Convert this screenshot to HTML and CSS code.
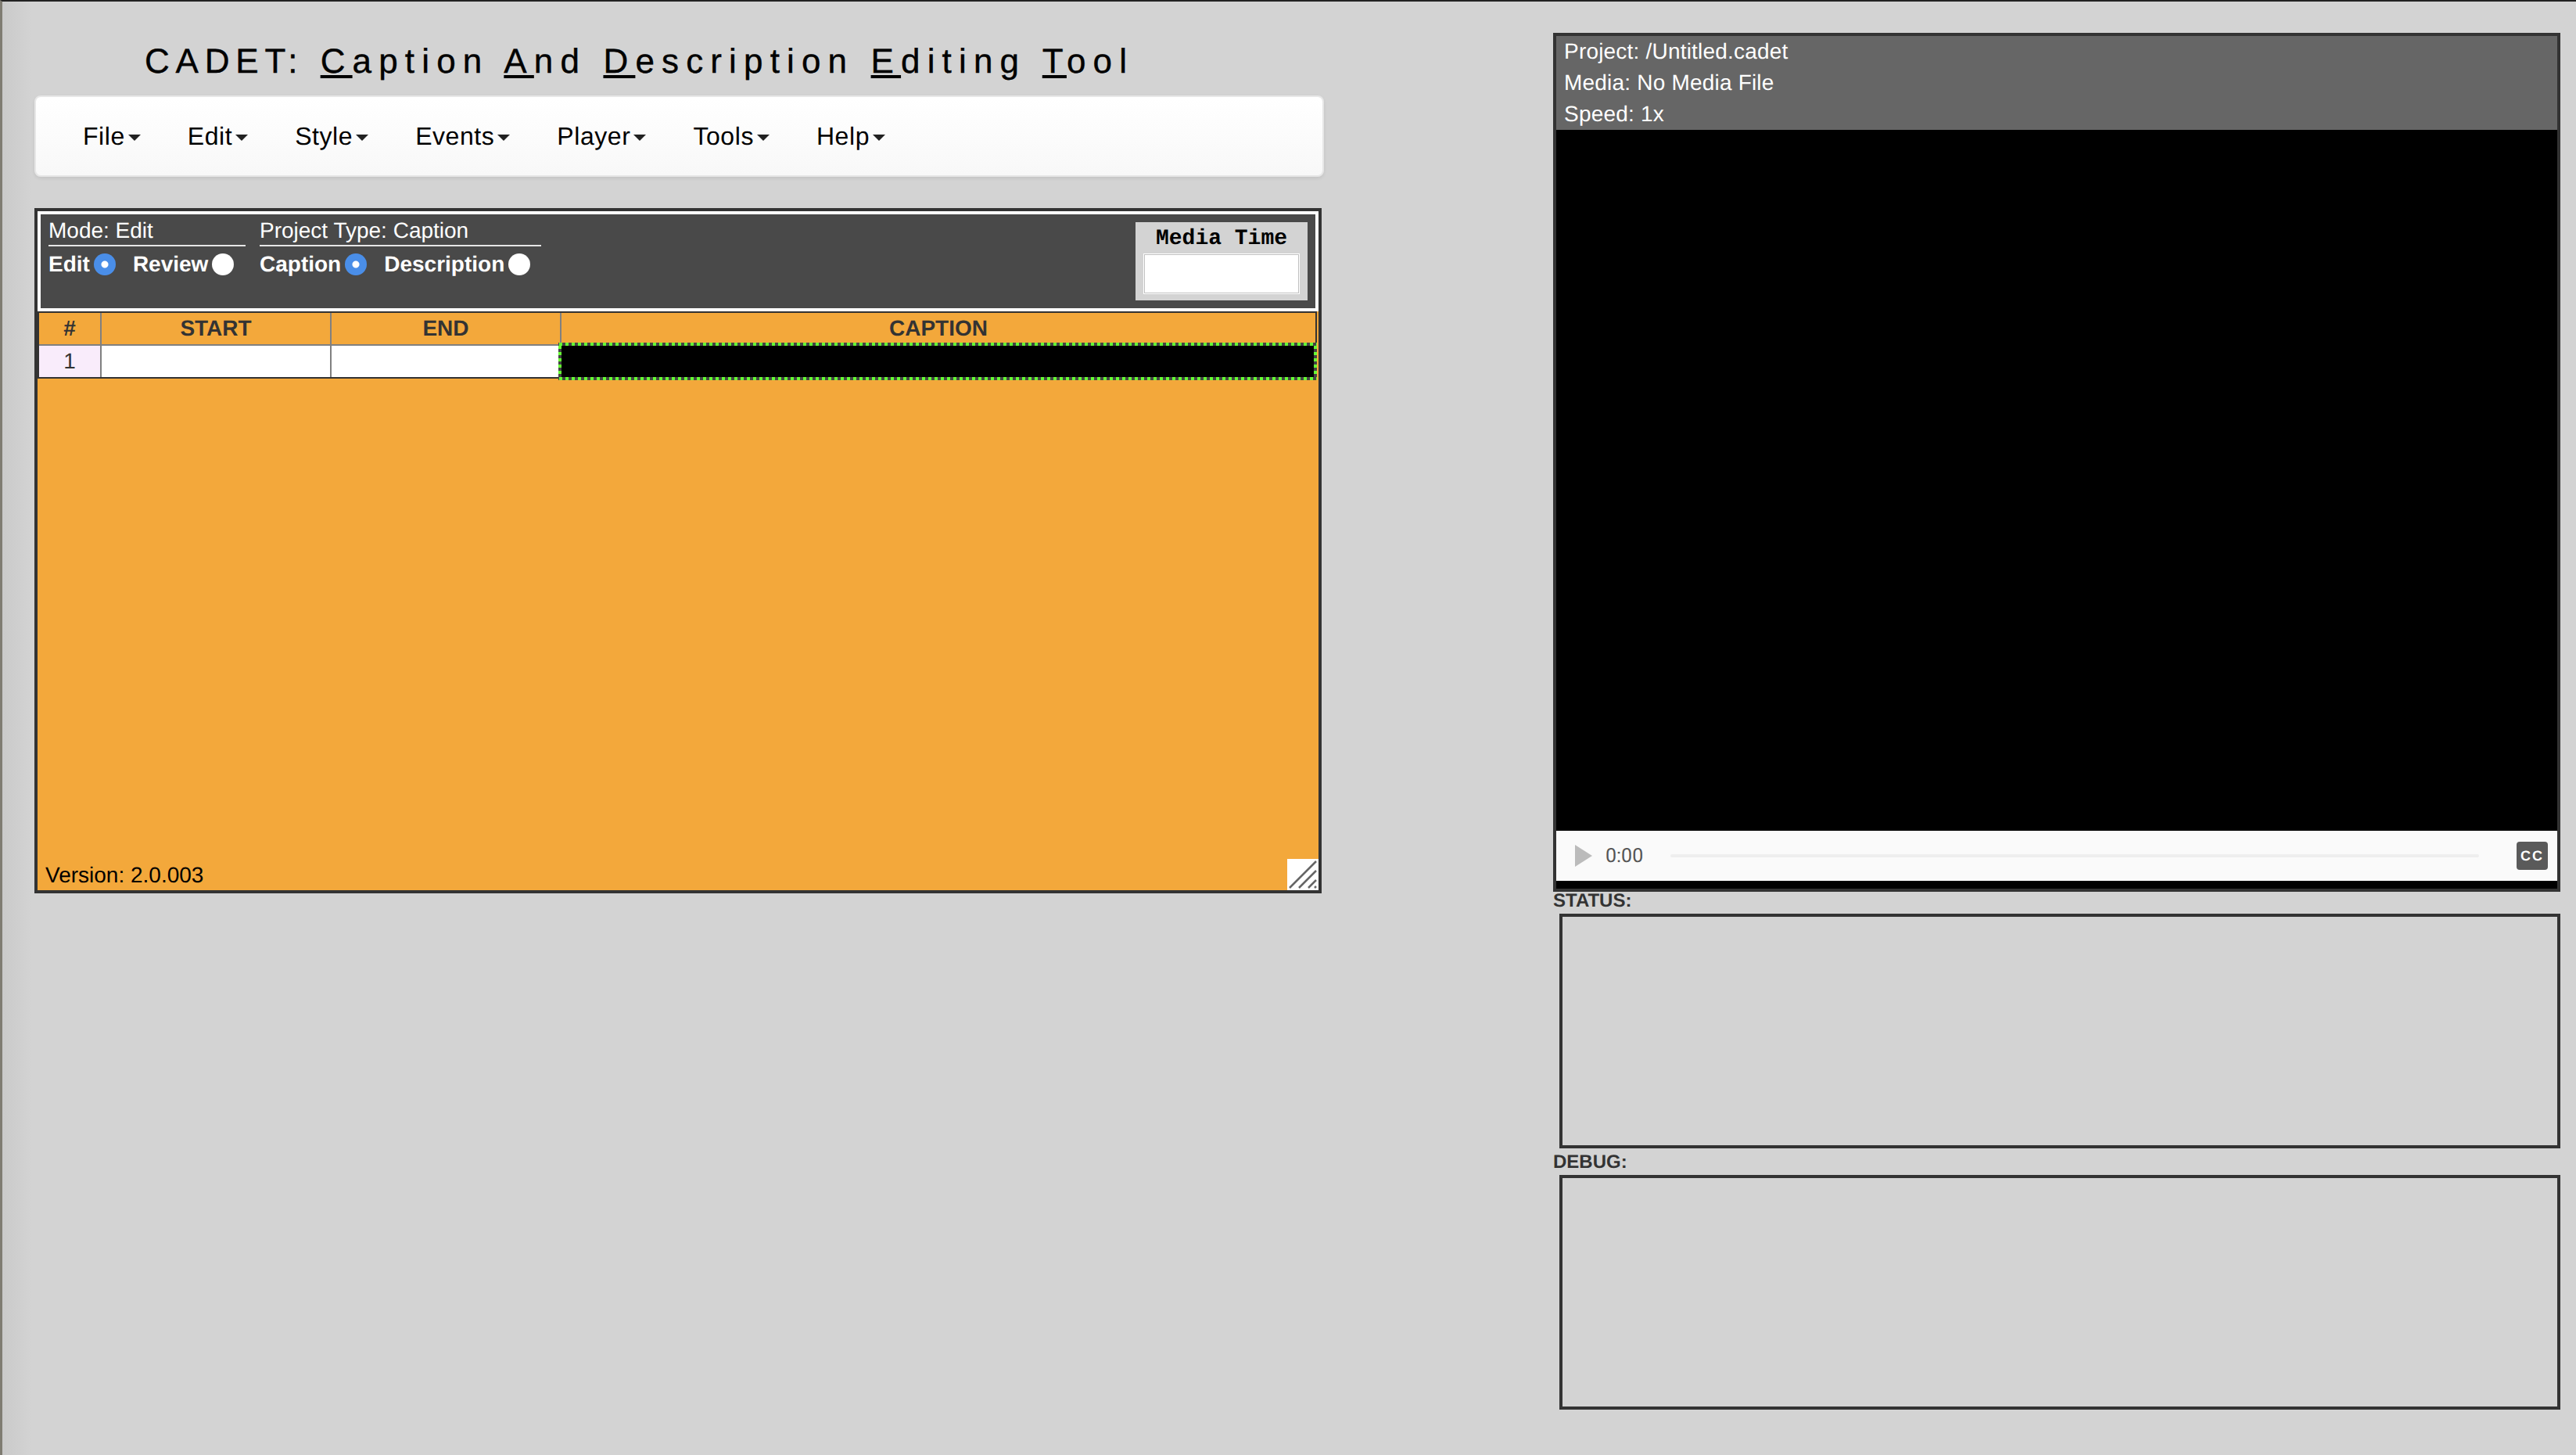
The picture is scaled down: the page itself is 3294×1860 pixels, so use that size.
FILE: index.html
```html
<!DOCTYPE html>
<html lang="en">
<head>
    <meta charset="UTF-8">
    <meta name="viewport" content="width=device-width, initial-scale=1.0">
    <title>CADET: Caption And Description Editing Tool</title>
    <link rel="stylesheet" href="styles.css">
</head>
<body>
    <div class="app">
        <!-- Left Column -->
        <div class="left-column">
            <h1 class="app-title"><span class="app-name">CADET:</span> <u>C</u>aption <u>A</u>nd <u>D</u>escription <u>E</u>diting <u>T</u>ool</h1>

            <nav class="navbar">
                <a class="nav-item">File<span class="caret"></span></a>
                <a class="nav-item">Edit<span class="caret"></span></a>
                <a class="nav-item">Style<span class="caret"></span></a>
                <a class="nav-item">Events<span class="caret"></span></a>
                <a class="nav-item">Player<span class="caret"></span></a>
                <a class="nav-item">Tools<span class="caret"></span></a>
                <a class="nav-item">Help<span class="caret"></span></a>
            </nav>

            <div class="editor">
                <div class="editor-header">
                    <div class="option-group mode-group">
                        <div class="option-title">Mode: Edit</div>
                        <div class="option-row">
                            <label class="option">Edit<input type="radio" name="mode" checked></label>
                            <label class="option">Review<input type="radio" name="mode"></label>
                        </div>
                    </div>
                    <div class="option-group type-group">
                        <div class="option-title">Project Type: Caption</div>
                        <div class="option-row">
                            <label class="option">Caption<input type="radio" name="type" checked></label>
                            <label class="option">Description<input type="radio" name="type"></label>
                        </div>
                    </div>
                    <div class="media-time">
                        <div class="media-time-label">Media Time</div>
                        <input type="text" class="media-time-input">
                    </div>
                </div>

                <div class="editor-body">
                    <table class="cue-table">
                        <thead>
                            <tr>
                                <th class="col-num">#</th>
                                <th class="col-time">START</th>
                                <th class="col-time">END</th>
                                <th>CAPTION</th>
                            </tr>
                        </thead>
                        <tbody>
                            <tr>
                                <td class="cell-num">1</td>
                                <td></td>
                                <td></td>
                                <td class="cell-active"></td>
                            </tr>
                        </tbody>
                    </table>
                    <div class="version">Version: 2.0.003</div>
                    <svg class="resizer" width="40" height="40" viewBox="0 0 40 40">
                        <rect width="40" height="40" fill="#fff"/>
                        <path d="M3 37L37 3M15 37L37 15M27 37L37 27M35 37L37 35" stroke="#666" stroke-width="2.5" fill="none"/>
                    </svg>
                </div>
            </div>
        </div>

        <!-- Right Column -->
        <div class="right-column">
            <div class="player">
                <div class="player-info">
                    <div>Project: /Untitled.cadet</div>
                    <div>Media: No Media File</div>
                    <div>Speed: 1x</div>
                </div>
                <div class="player-screen"></div>
                <div class="player-controls">
                    <svg class="play-icon" width="22" height="28" viewBox="0 0 22 28">
                        <path d="M0 0L22 14L0 28Z" fill="#bbb"/>
                    </svg>
                    <span class="player-time">0:00</span>
                    <div class="player-track"></div>
                    <span class="cc-button">CC</span>
                </div>
            </div>

            <div class="log-label">STATUS:</div>
            <div class="log-box"></div>
            <div class="log-label">DEBUG:</div>
            <div class="log-box"></div>
        </div>
    </div>
</body>
</html>
```

FILE: styles.css
```css
/* General Styles */
* {
    box-sizing: border-box;
}

body {
    margin: 0;
    padding: 0;
    height: 1860px;
    overflow: hidden;
    font-family: "Liberation Sans", Arial, sans-serif;
    font-size: 28px;
    text-rendering: geometricPrecision;
    background: linear-gradient(90deg, #c9c9c9, #d3d3d3 40px);
    border-top: 2px solid #222;
    border-left: 3px solid #7f7c72;
}

.app {
    display: flex;
    justify-content: space-between;
    padding: 40px 20px 0 41px;
}

/* Title and Menu */
.left-column {
    width: 1649px;
}

.app-title {
    margin: 0;
    height: 80px;
    padding: 12px 0 0 141px;
    font-size: 44px;
    font-weight: normal;
    line-height: 50px;
    letter-spacing: 9.15px;
    color: #000;
    white-space: nowrap;
    -webkit-text-stroke: 0.4px #000;
}

.app-name {
    letter-spacing: 7.8px;
}

.navbar {
    display: flex;
    height: 104px;
    padding: 0 30px;
    align-items: center;
    background: linear-gradient(#fff, #f8f8f8);
    border: 2px solid #e7e7e7;
    border-radius: 8px;
    box-shadow: 0 2px 4px rgba(0, 0, 0, 0.08);
}

.nav-item {
    padding: 0 30px;
    font-size: 32px;
    letter-spacing: 0.56px;
    color: #000;
}

.caret {
    display: inline-block;
    margin-left: 4px;
    vertical-align: middle;
    border-top: 8px solid #222;
    border-left: 8px solid transparent;
    border-right: 8px solid transparent;
}

/* Editor */
.editor {
    margin-top: 40px;
    width: 1646px;
    height: 876px;
    display: flex;
    flex-direction: column;
    background-color: #f3a83b;
    border: 4px solid #333;
}

.editor-header {
    display: flex;
    height: 128px;
    padding: 10px 10px 0 10px;
    background-color: #494949;
    border: 4px solid #fff;
    color: #fff;
}

.option-group {
    display: flex;
    flex-direction: column;
}

.mode-group {
    width: 252px;
    margin-right: 18px;
}

.type-group {
    width: 360px;
    margin-right: auto;
}

.option-title {
    height: 31px;
    line-height: 22px;
    border-bottom: 2px solid #e6e6e6;
}

.option-row {
    display: flex;
    align-items: center;
    gap: 22px;
    height: 46px;
    font-weight: bold;
}

.option {
    display: flex;
    align-items: center;
    gap: 5px;
}

.option input {
    appearance: none;
    width: 28px;
    height: 28px;
    margin: 0;
    border-radius: 50%;
    background: radial-gradient(#fff 60%, #ececec);
}

.option input:checked {
    background: radial-gradient(#fff 0, #fff 4px, #4a8ee8 5px);
}

.media-time {
    width: 220px;
    height: 100px;
    padding: 8px 10px 0;
    background-color: #d3d3d3;
    text-align: center;
}

.media-time-label {
    height: 32px;
    font-family: "Liberation Mono", "Courier New", monospace;
    font-size: 28px;
    font-weight: bold;
    line-height: 28px;
    color: #000;
}

.media-time-input {
    display: block;
    width: 198px;
    height: 50px;
    margin: 1px;
    padding: 0;
    background-color: #fff;
    border: 1px solid #c0c0c0;
    box-shadow: 0 0 0 1px #fff;
}

/* Cue Table */
.editor-body {
    position: relative;
    flex: 1;
}

.cue-table {
    width: 1636px;
    table-layout: fixed;
    border-collapse: separate;
    border-spacing: 0;
    border: 2px solid #333;
}

.cue-table th,
.cue-table td {
    height: 42px;
    padding: 0;
    text-align: center;
    vertical-align: middle;
    border-bottom: 2px solid #808080;
    border-right: 2px solid #808080;
}

.cue-table th {
    font-size: 28px;
    color: #333;
}

.cue-table td {
    height: 40px;
    background-color: #fff;
    border-bottom: none;
    color: #333;
}

.cue-table th:last-child,
.cue-table td:last-child {
    border-right: none;
}

.col-num {
    width: 80px;
}

.col-time {
    width: 294px;
}

.cue-table .cell-num {
    background-color: #f9ecfb;
}

.cue-table .cell-active {
    position: relative;
    background-color: #000;
}

.cell-active::after {
    content: "";
    position: absolute;
    top: -4px;
    right: -2px;
    bottom: -4px;
    left: -4px;
    background:
        linear-gradient(90deg, #66ff33 50%, #444 50%) top / 8px 4px repeat-x,
        linear-gradient(90deg, #66ff33 50%, #444 50%) bottom / 8px 4px repeat-x,
        linear-gradient(#66ff33 50%, #444 50%) left / 4px 8px repeat-y,
        linear-gradient(#66ff33 50%, #444 50%) right / 4px 8px repeat-y;
}

.version {
    position: absolute;
    left: 10px;
    bottom: 2px;
    line-height: 34px;
    color: #000;
}

.resizer {
    position: absolute;
    right: 0;
    bottom: 0;
}

/* Player */
.right-column {
    width: 1288px;
}

.player {
    height: 1098px;
    display: flex;
    flex-direction: column;
    background-color: #000;
    border: 4px solid #333;
}

.player-info {
    height: 120px;
    padding-left: 10px;
    background-color: #666;
    color: #fff;
    letter-spacing: 0.2px;
    line-height: 40px;
}

.player-screen {
    flex: 1;
}

.player-controls {
    display: flex;
    align-items: center;
    height: 64px;
    margin-bottom: 10px;
    padding: 0 12px 0 24px;
    background-color: #fafafa;
}

.play-icon {
    flex: none;
}

.player-time {
    margin-left: 17px;
    width: 83px;
    font-family: Roboto, sans-serif;
    font-size: 25px;
    color: #555;
}

.player-track {
    width: 1034px;
    height: 4px;
    border-radius: 2px;
    background-color: #eee;
}

.cc-button {
    margin-left: auto;
    width: 40px;
    height: 36px;
    font-size: 18px;
    font-weight: bold;
    letter-spacing: 2px;
    line-height: 36px;
    text-align: center;
    border-radius: 4px;
    background-color: #5a5a5a;
    color: #fff;
}

/* Status and Debug */
.log-label {
    height: 28px;
    font-size: 24px;
    font-weight: bold;
    line-height: 24px;
    color: #333;
}

.log-box {
    height: 300px;
    margin-left: 8px;
    margin-bottom: 6px;
    border: 4px solid #333;
}
```
